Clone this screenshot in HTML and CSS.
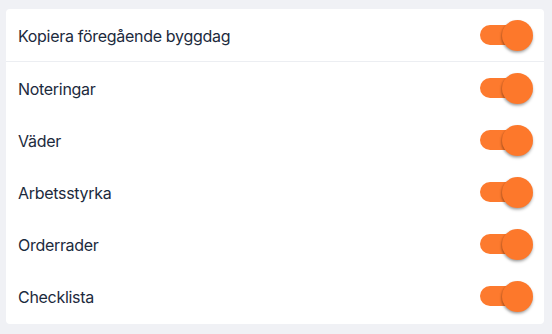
FILE: index.html
```html
<!DOCTYPE html>
<html lang="sv">
<head>
<meta charset="utf-8">
<link rel="stylesheet" href="styles.css">
</head>
<body>
<div class="card">
  <div class="row first"><span class="label">Kopiera föregående byggdag</span><span class="switch"><span class="track"></span><span class="knob"></span></span></div>
  <div class="row"><span class="label">Noteringar</span><span class="switch"><span class="track"></span><span class="knob"></span></span></div>
  <div class="row"><span class="label">Väder</span><span class="switch"><span class="track"></span><span class="knob"></span></span></div>
  <div class="row"><span class="label">Arbetsstyrka</span><span class="switch"><span class="track"></span><span class="knob"></span></span></div>
  <div class="row"><span class="label">Orderrader</span><span class="switch"><span class="track"></span><span class="knob"></span></span></div>
  <div class="row"><span class="label">Checklista</span><span class="switch"><span class="track"></span><span class="knob"></span></span></div>
</div>
</body>
</html>
```
FILE: styles.css
```css
html, body {
  margin: 0;
  padding: 0;
  background: #f0f1f5;
}
body {
  padding: 9px 8px 11px 6px;
  font-family: Inter, "Noto Sans", sans-serif;
}
.card {
  background: #ffffff;
  border-radius: 4px;
  display: flex;
  flex-direction: column;
  padding-bottom: 2px;
}
.row {
  height: 52px;
  display: flex;
  align-items: center;
  justify-content: space-between;
  padding: 0 11px 0 12px;
}
.row.first {
  border-bottom: 1px solid #eceef2;
}
.label {
  font-size: 16px;
  color: #1c2a3d;
  letter-spacing: -0.3px;
  padding-top: 2px;
}
.switch {
  position: relative;
  width: 53px;
  height: 31px;
  display: block;
}
.track {
  position: absolute;
  left: 0;
  top: 5px;
  width: 42px;
  height: 20px;
  border-radius: 10px;
  background: #fd7a2e;
}
.knob {
  position: absolute;
  right: 0;
  top: 0;
  width: 31px;
  height: 31px;
  border-radius: 50%;
  background: #fd782b;
  box-shadow: 0 2px 3px rgba(0, 0, 0, 0.25), -1px 1px 2px rgba(0,0,0,0.15);
}
```
